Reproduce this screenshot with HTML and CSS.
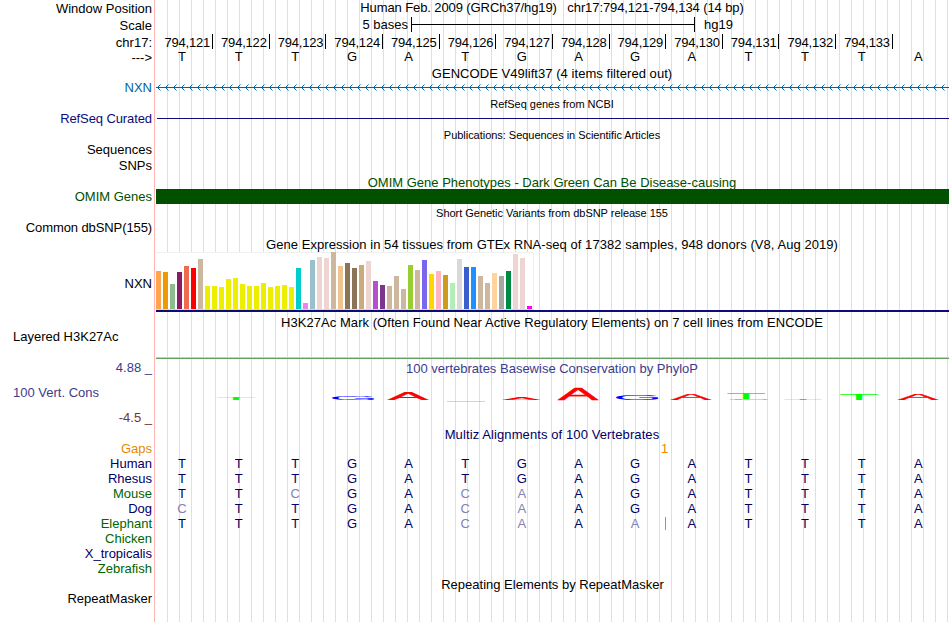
FILE: index.html
```html
<!DOCTYPE html>
<html lang="en">
<head>
<meta charset="utf-8">
<title>Genome Browser hg19 chr17:794,121-794,134</title>
<link rel="stylesheet" href="styles.css">
</head>
<body>
<main class="browser">
  <div class="row h17"><div class="label drop">Window Position</div><div class="title tight">Human Feb. 2009 (GRCh37/hg19) &nbsp; chr17:794,121-794,134 (14 bp)</div></div>
  <div class="row h17"><div class="label drop">Scale</div><div class="scale"><span class="scale-size">5 bases</span><span class="scale-bar"></span><span>hg19</span></div></div>
  <div class="row h15"><div class="label drop">chr17:</div><div class="ruler" id="ruler"></div></div>
  <div class="row h17"><div class="label drop">---&gt;</div><div class="bases ink" data-seq="TTTGATGAGATTTA"></div></div>

  <div class="row h14"><div class="label"></div><div class="title loose">GENCODE V49lift37 (4 items filtered out)</div></div>
  <div class="row h17"><div class="label gene">NXN</div><svg class="track" width="793" height="17"><defs><pattern id="arrows" width="8" height="17" patternUnits="userSpaceOnUse"><path d="M0 7.5H8M4.5 4.5L1.5 7.5L4.5 10.5"/></pattern></defs><rect width="793" height="17" fill="url(#arrows)"/></svg></div>
  <div class="row h14"><div class="label"></div><div class="title small">RefSeq genes from NCBI</div></div>
  <div class="row h17"><div class="label refseq tight">RefSeq Curated</div><div class="refseq-line"></div></div>
  <div class="row h14"><div class="label"></div><div class="title small">Publications: Sequences in Scientific Articles</div></div>
  <div class="row h16"><div class="label">Sequences</div></div>
  <div class="row h17"><div class="label">SNPs</div></div>
  <div class="row h14"><div class="label"></div><div class="title omim">OMIM Gene Phenotypes - Dark Green Can Be Disease-causing</div></div>
  <div class="row h17"><div class="label omim">OMIM Genes</div><div class="omim-bar"></div></div>
  <div class="row h14"><div class="label"></div><div class="title small">Short Genetic Variants from dbSNP release 155</div></div>
  <div class="row h17"><div class="label tight">Common dbSNP(155)</div></div>

  <div class="row h15"><div class="label"></div><div class="title loose">Gene Expression in 54 tissues from GTEx RNA-seq of 17382 samples, 948 donors (V8, Aug 2019)</div></div>
  <div class="row h63"><div class="label middle">NXN</div><div class="gtex"><div class="bars" id="bars"></div></div></div>

  <div class="row h14"><div class="label"></div><div class="title loose">H3K27Ac Mark (Often Found Near Active Regulatory Elements) on 7 cell lines from ENCODE</div></div>
  <div class="row h31"><div class="label left">Layered H3K27Ac</div><div class="h3k"></div></div>

  <div class="row h25"><div class="label cons">4.88 _</div><div class="title cons drop">100 vertebrates Basewise Conservation by PhyloP</div></div>
  <div class="row h25"><div class="label left cons">100 Vert. Cons</div>
    <svg class="logo" width="794" height="25">
      <g id="logo"></g>
      <path class="olive" d="M292 16.5H330M575 14.5H613"/>
      <path class="olive strong" d="M580 14.5H587M608 14.5H611"/>
    </svg>
  </div>
  <div class="row h17"><div class="label neg">-4.5 _</div></div>

  <div class="row h14"><div class="label"></div><div class="title navy looser">Multiz Alignments of 100 Vertebrates</div></div>
  <div class="row h15"><div class="label gaps">Gaps</div><div class="gap-count">1</div></div>
  <div class="row h15"><div class="label navy">Human</div><div class="bases" data-seq="TTTGATGAGATTTA"></div></div>
  <div class="row h15"><div class="label navy">Rhesus</div><div class="bases" data-seq="TTTGATGAGATTTA"></div></div>
  <div class="row h15"><div class="label green">Mouse</div><div class="bases" data-seq="TTcGAcaAGATTTA"></div></div>
  <div class="row h15"><div class="label navy">Dog</div><div class="bases" data-seq="cTTGAcaAGATTTA"></div></div>
  <div class="row h15"><div class="label green">Elephant</div><div class="bases insertion" data-seq="TTTGAcaAaATTTA"></div></div>
  <div class="row h15"><div class="label green">Chicken</div></div>
  <div class="row h15"><div class="label navy">X_tropicalis</div></div>
  <div class="row h16"><div class="label green">Zebrafish</div></div>

  <div class="row h14"><div class="label"></div><div class="title shift">Repeating Elements by RepeatMasker</div></div>
  <div class="row h31"><div class="label">RepeatMasker</div></div>
</main>
<script src="tracks.js"></script>
</body>
</html>
```
FILE: styles.css
```css
body {
  margin: 0;
  background: #fff;
  color: #000;
  font: 13px/15px "Liberation Sans", Arial, sans-serif;
}
.browser {
  width: 950px;
  height: 622px;
  overflow: hidden;
  background:
    linear-gradient(#ffb4b4, #ffb4b4) 154px 0 / 1px 100% no-repeat,
    repeating-linear-gradient(90deg, #dcdcf8 0 1px, transparent 1px 12px) 167px 0 / 782px 100% no-repeat;
}
.row {
  display: grid;
  grid-template-columns: 155px 794px;
  white-space: pre;
}
.h14 { height: 14px; }
.h15 { height: 15px; }
.h16 { height: 16px; }
.h17 { height: 17px; }
.h25 { height: 25px; }
.h31 { height: 31px; }
.h63 { height: 63px; }
.label { padding-right: 3px; text-align: right; }
.label.left { padding-left: 13px; text-align: left; }
.label.middle { padding-top: 24px; }
.drop { padding-top: 1px; }
.title { text-align: center; }
.small { font-size: 11px; letter-spacing: -0.03px; }
.tight { letter-spacing: -0.1px; }
.loose { letter-spacing: 0.05px; }
.looser { letter-spacing: 0.1px; }
.shift { padding-left: 1px; }

.gene { color: #0064a0; }
.refseq { color: #0c0c78; }
.omim { color: #005000; }
.cons { color: #3c3c8c; }
.neg { color: #783232; }
.navy { color: #000064; }
.green { color: #006400; }
.gaps { color: #e68a00; }

.scale { display: flex; }
.scale-size { width: 253px; padding-right: 3px; text-align: right; }
.scale-bar {
  width: 282px;
  height: 15px;
  margin-right: 9px;
  border: solid #000;
  border-width: 0 1px;
  background: linear-gradient(#000, #000) 0 7px / 100% 1px no-repeat;
}
.ruler {
  display: grid;
  grid-template-columns: repeat(14, 56.65px);
  padding-left: 1.4px;
  letter-spacing: -0.2px;
}
.ruler span {
  height: 14px;
  padding: 1px 2px 0 0;
  border-right: 1px solid #000;
  text-align: right;
}
.bases {
  display: grid;
  grid-template-columns: repeat(14, 56.65px);
  margin-left: -1.3px;
  color: #000064;
  text-align: center;
}
.bases.ink { color: #000; }
.bases .mismatch { color: #8282b4; }
.insertion { background: linear-gradient(#e68a00, #e68a00) 511px 1px / 1px 13px no-repeat; }
.gap-count { padding-left: 506px; color: #e68a00; }

.track { margin-left: 1px; }
.track path { fill: none; stroke: #0064a0; }
.refseq-line { height: 1px; margin: 7px 0 0 2px; background: #0c0c78; }
.omim-bar { height: 15px; margin-left: 1px; background: #005000; }
.gtex { height: 58px; margin-left: 1px; border-bottom: 2px solid #0c0c78; }
.bars {
  display: flex;
  gap: 2px;
  align-items: flex-end;
  box-sizing: border-box;
  width: 378px;
  height: 58px;
  border: solid #f0f0f0;
  border-width: 1px 1px 1px 0;
  border-bottom-color: #d8d8d8;
  background: #fff;
}
.bars i { flex: none; width: 5px; }
.h3k {
  height: 1px;
  margin: 28px 0 0 1px;
  border-top: 1px solid #f0c878;
  background: #64a064;
  align-self: start;
}
.logo { font-size: 10px; }
.logo path { stroke: #b4b450; stroke-opacity: .5; }
.logo path.strong { stroke-opacity: .8; }
```
FILE: tracks.js
```js
// Ruler positions, one per base except the last
const ruler = document.getElementById('ruler');
for (let p = 121; p <= 133; p++) {
  const s = document.createElement('span');
  s.textContent = '794,' + p;
  ruler.append(s);
}

// Lower case letters are mismatches against the human sequence
document.querySelectorAll('.bases').forEach(row => {
  for (const c of row.dataset.seq) {
    const s = document.createElement('span');
    s.textContent = c.toUpperCase();
    if (c !== c.toUpperCase()) s.className = 'mismatch';
    row.append(s);
  }
});

// GTEx tissues: height and colour
const yellow = '#eeee00', tan = '#cdb79e', pink = '#eed5d2';
const tissues = [
  [38, '#ffa54f'], [37, '#ee9a00'], [25, '#8fbc8f'], [37, '#8b1c62'], [43, '#ee6a50'], [41, '#ff0000'], [50, tan],
  [23, yellow], [23, yellow], [22, yellow], [30, yellow], [31, yellow], [25, yellow], [23, yellow], [23, yellow],
  [26, yellow], [22, yellow], [23, yellow], [24, yellow], [22, yellow],
  [41, '#00cdcd'], [6, '#ee82ee'], [49, '#9ac0cd'], [52, pink], [51, pink], [57, tan], [43, '#eec591'],
  [46, '#8b7355'], [41, '#8b7355'], [44, '#cdaa7d'], [48, pink], [28, '#b452cd'], [24, '#7a378b'],
  [23, tan], [33, tan], [20, tan], [44, '#9acd32'], [39, tan], [49, '#7a67ee'], [35, '#ffd700'],
  [38, '#ffb6c1'], [34, '#cd9b1d'], [26, '#b4eeb4'], [50, '#d9d9d9'], [42, '#3a5fcd'], [42, '#1e90ff'],
  [33, tan], [26, tan], [36, '#ffd39b'], [33, '#a6a6a6'], [38, '#008b45'], [55, pink], [51, pink], [3, '#ff00ff']
];
const bars = document.getElementById('bars');
for (const [h, color] of tissues) {
  const b = document.createElement('i');
  b.style.height = h + 'px';
  b.style.background = color;
  bars.append(b);
}

// Conservation letters: base, left, width, top, bottom
const colors = { A: '#ff0000', G: '#0000ff', T: '#00ff00' };
const box = { A: [0.02, 6.63], G: [0.5, 6.7], T: [0.2, 5.7] };
const letters = [
  ['T', 62, 38, 13, 15], ['G', 177, 43, 11.4, 14.8], ['A', 233, 40, 7, 15], ['A', 347, 39, 13.2, 15],
  ['A', 403, 40, 3.2, 15], ['G', 461, 43, 9.4, 14.8], ['A', 516, 40, 9, 15], ['T', 572, 38, 8, 14],
  ['T', 629, 38, 14, 15], ['T', 685, 38, 9, 15], ['A', 743, 40, 9, 15]
];
for (const [c, x, w, top, bottom] of letters) {
  const t = document.createElementNS('http://www.w3.org/2000/svg', 'text');
  const sx = w / box[c][1];
  t.setAttribute('transform', `translate(${x - box[c][0] * sx} ${bottom}) scale(${sx} ${(bottom - top) / 6.88})`);
  t.setAttribute('fill', colors[c]);
  t.setAttribute('stroke', colors[c]);
  t.setAttribute('stroke-width', c === 'A' && bottom - top > 3 ? 0.2 : 0);
  t.textContent = c;
  document.getElementById('logo').append(t);
}
```
